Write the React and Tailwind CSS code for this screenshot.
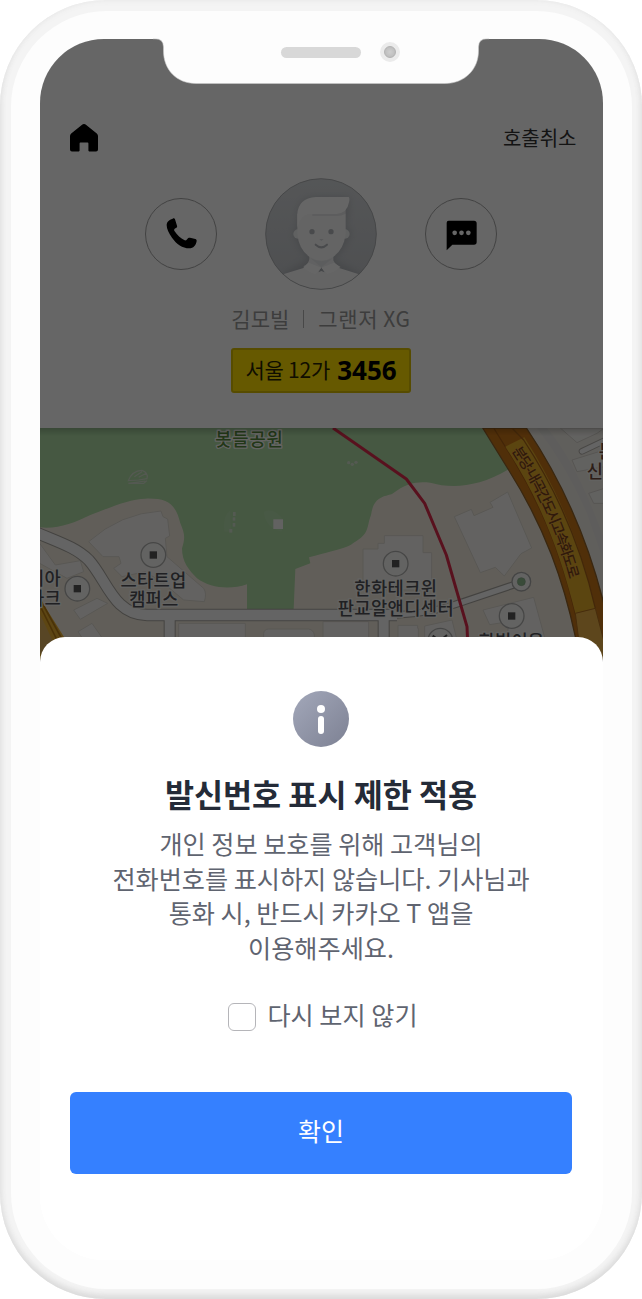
import React from "react";

function HomeIcon() {
  return (
    <svg className="h-7 w-7" viewBox="0 0 28 28" fill="#000">
      <path d="M12.4.6a2.6 2.6 0 0 1 3.2 0l11.2 8.900c.8.7 1.2 1.5 1.2 2.5V25.400a2 2 0 0 1-2 2h-6.800a.8.8 0 0 1-.8-.8V19.400a.8.8 0 0 0-.8-.8h-7.200a.8.8 0 0 0-.8.8v7.200a.8.8 0 0 1-.8.8h-6.800a2 2 0 0 1-2-2V12c0-1 .4-1.800 1.200-2.500z" />
    </svg>
  );
}

function PhoneIcon() {
  return (
    <svg className="h-[31px] w-[31px]" viewBox="0 0 93 93" fill="#000">
      <path d="M20 2C23 0 26 1 27 4L33 23C34 26 33 28 31 29L26 32C24 34 24 37 26 40C34 52 43 61 56 67C59 68 61 67 62 65L66 61C67 59 70 59 72 59L88 63C91 64 92 66 92 69C90 82 82 91 70 91C49 90 32 79 18 59C8 45 2 33 2 22C2 12 9 5 20 2Z" />
    </svg>
  );
}

function ChatIcon() {
  return (
    <svg className="mt-[3px] h-[31px] w-[31px]" viewBox="0 0 93 93">
      <path d="M8 2H84Q92 2 92 10V66Q92 74 84 74H19L2 91V8Q2 2 8 2Z" fill="#000" />
      <circle cx="26" cy="38.500" r="7" fill="#fff" />
      <circle cx="46.500" cy="38.500" r="7" fill="#fff" />
      <circle cx="67" cy="38.500" r="7" fill="#fff" />
    </svg>
  );
}

function Avatar() {
  return (
    <svg className="h-[112px] w-[112px]" viewBox="405 23 336 336">
      <defs>
        <clipPath id="face">
          <circle cx="573" cy="191" r="166" />
        </clipPath>
        <linearGradient id="faceBg" x1="0" y1="0" x2="0" y2="1">
          <stop offset="0" stopColor="#d4d7da" />
          <stop offset="1" stopColor="#c2c5c9" />
        </linearGradient>
        <filter id="soft" x="-30%" y="-30%" width="160%" height="160%">
          <feGaussianBlur stdDeviation="9" />
        </filter>
      </defs>
      <g clipPath="url(#face)">
        <rect x="405" y="23" width="336" height="336" fill="url(#faceBg)" />
        <path d="M502 140Q502 80 560 80H657Q660 120 648 170Q672 180 655 208Q640 240 612 268L690 310L740 359H430L460 310L536 265Q508 240 500 210Q480 190 500 172Z" fill="#8d9198" opacity=".35" filter="url(#soft)" />
        <path d="M440 318L530 290L573 300L618 290L706 318L720 359H430Z" fill="#fafafa" />
        <path d="M538 240H610V270Q615 282 632 290L590 310L574 293L557 310L520 288Q536 282 538 266Z" fill="#f2f3f4" />
        <path d="M541 263Q573 282 609 263L574 291Z" fill="#dfe1e3" opacity=".6" />
        <path d="M565 306L574 291L584 306L574 302Z" fill="#aaaeb4" />
        <path d="M536 277L520 292Q538 307 557 311L574 292ZM612 277L630 290Q612 307 591 311L574 292Z" fill="#fff" />
        <circle cx="504" cy="191" r="14" fill="#f1f2f3" />
        <circle cx="645" cy="191" r="14" fill="#f1f2f3" />
        <path d="M502 130H647V190Q642 236 610 259Q574 281 538 259Q506 236 502 190Z" fill="#fafafa" />
        <path d="M547 129H625L647 115V130Q635 137 620 137H547Z" fill="#e8e9ea" />
        <path d="M502 172V132Q504 84 558 80H656Q660 84 657 96Q652 128 620 131H535Q510 136 502 172Z" fill="#fff" />
        <circle cx="546" cy="184" r="8" fill="#b7babf" />
        <circle cx="603" cy="184" r="8" fill="#b7babf" />
        <path d="M568 206H581L574 212Z" fill="#dadcdf" />
        <path d="M557 223Q574 239 591 223" stroke="#b7babf" strokeWidth="6" fill="none" strokeLinecap="round" />
      </g>
      <circle cx="573" cy="191" r="166" fill="none" stroke="#a5a7aa" strokeWidth="2.500" />
    </svg>
  );
}

function Poi({ x, y }) {
  return (
    <g>
      <circle cx={x} cy={y} r="37" fill="#f8f8f6" stroke="#b0b0ae" strokeWidth="4" />
      <rect x={x - 11} y={y - 11} width="22" height="22" fill="#555" />
    </g>
  );
}

function Label({ x, y, width, fill = "#505257", children }) {
  return (
    <text x={x} y={y} textAnchor="middle" textLength={width} fontSize="53" fontWeight="500" fill={fill} stroke="#f8f8f4" strokeWidth="8" strokeLinejoin="round" paintOrder="stroke">
      {children}
    </text>
  );
}

function CityMap() {
  return (
    <svg className="block h-[232px] w-full font-['Noto_Sans_CJK_KR',sans-serif]" viewBox="29 24 1689 696" preserveAspectRatio="none">
      <defs>
        <linearGradient id="mapShade" x1="0" y1="0" x2="0" y2="1">
          <stop offset="0" stopColor="#000" stopOpacity=".18" />
          <stop offset="1" stopColor="#000" stopOpacity="0" />
        </linearGradient>
        <path id="highwayName" d="M1444 92C1527 215 1582 350 1619 484" />
      </defs>
      <rect x="28" y="24" width="1694" height="700" fill="#f3ecde" />

      <path d="M28 24V322C80 328 130 310 180 285C240 262 300 236 345 236C410 234 436 250 450 310C462 340 466 350 455 385C455 425 475 450 500 475C540 505 600 510 650 493V567H790L795 447L840 430L836 412Q855 408 870 403C920 388 950 385 970 368C1020 340 1008 320 1022 285C1030 230 1060 230 1085 222C1130 188 1160 184 1200 188C1260 205 1340 205 1435 148L1355 24Z" fill="#aedba5" />
      <g fill="#b5deac">
        <path d="M600 270Q575 290 582 335H602Z" />
        <path d="M700 275Q730 260 760 300L755 335Q705 325 700 275Z" />
      </g>
      <path d="M294 182Q305 152 335 151Q355 158 350 176L325 180Q300 181 294 182ZM294 190L345 183M294 190L340 190L350 182M312 170L335 155M325 172L348 160" stroke="#d3dfcc" strokeWidth="3.500" fill="none" />
      <g fill="#d3e0cc">
        <rect x="608" y="276" width="8" height="12" />
        <rect x="607" y="292" width="8" height="10" />
        <rect x="607" y="309" width="8" height="11" />
        <rect x="597" y="327" width="9" height="11" />
        <circle cx="955" cy="128" r="5" />
        <circle cx="966" cy="133" r="5" />
        <circle cx="977" cy="127" r="5" />
        <rect x="729" y="298" width="29" height="29" fill="#f5f5f2" />
      </g>

      <g fill="#f8f6f3" stroke="#dedad2" strokeWidth="3">
        <path d="M175 365Q270 280 392 273L398 290L412 297L418 348L405 355L410 410L520 505Q530 520 522 545L460 540L400 490L345 455L275 470L250 445L272 430L266 410L218 410Z" />
        <path d="M28 370L75 435L150 422L160 455L110 475L28 430Z" />
        <path d="M130 570L200 535L232 550L150 598Z" />
        <path d="M143 635L185 610L220 660H160Z" />
        <path d="M445 610H645V660H445Z" />
        <path d="M700 660V640Q702 627 715 627H835Q850 630 852 645V660Z" />
        <path d="M878 605H1015V660H878Z" />
        <path d="M998 510V387H1043V370H1062V347H1178V398H1204V510Z" />
        <path d="M1272 290L1323 268L1331 287L1388 262L1379 247L1432 216L1504 384L1472 401L1422 468L1395 442L1350 458Z" />
        <path d="M1358 570L1510 532L1545 660H1430L1435 605L1378 614Z" />
        <path d="M1103 660V616H1162V625H1164V660Z" />
        <path d="M1183 618L1265 600L1280 660H1183Z" />
      </g>
      <path d="M1488 24H1722V640Z" fill="#f1ede6" />
      <path d="M1520 24Q1610 140 1670 280L1722 430V360Q1640 130 1550 24Z" fill="#eae8e5" />
      <g fill="#f6f4f0" stroke="#d8d5cf" strokeWidth="3">
        <path d="M1590 24L1640 68L1700 40L1722 24Z" />
        <path d="M1625 120L1722 90V140L1640 155Z" />
        <path d="M1675 220L1722 205V250L1690 250Z" />
      </g>

      <g fill="none" strokeLinejoin="round">
        <path d="M0 330C80 365 135 380 175 420C230 480 250 585 350 585H1100" stroke="#aaa7a2" strokeWidth="37" />
        <path d="M418 590V700M1060 590V700" stroke="#aaa7a2" strokeWidth="36" />
        <path d="M1090 585C1200 580 1250 562 1300 545L1455 493" stroke="#aaa7a2" strokeWidth="23" />
        <path d="M0 330C80 365 135 380 175 420C230 480 250 585 350 585H1100" stroke="#fbfbfa" strokeWidth="31" />
        <path d="M1085 585C1200 580 1250 562 1300 545L1455 493" stroke="#fbfbfa" strokeWidth="16" />
        <path d="M418 580V700M1060 580V700" stroke="#fbfbfa" strokeWidth="30" />
        <path d="M1655 94L1722 62" stroke="#b4b1ac" strokeWidth="20" strokeLinecap="round" />
        <path d="M1655 94L1722 62" stroke="#fbfbfa" strokeWidth="14" strokeLinecap="round" />
      </g>
      <circle cx="1473" cy="485" r="28" fill="#f8f8f6" stroke="#aaa" strokeWidth="4" />
      <circle cx="1473" cy="485" r="12" fill="#8fbb90" stroke="#8aa88a" strokeWidth="2" />

      <path d="M1357 24L1435 150C1545 325 1600 485 1635 650L1640 720H1725V570C1680 380 1600 190 1488 24Z" fill="#c97618" stroke="#8f6128" strokeWidth="4" />
      <path d="M1390 24L1450 120C1550 285 1610 450 1650 650L1655 720" fill="none" stroke="#a85e14" strokeWidth="4" />
      <path d="M1425 80L1482 52C1590 220 1655 390 1695 565L1635 580C1590 400 1530 240 1425 80Z" fill="#e3ac28" />
      <path d="M1635 580L1695 565L1725 680V720H1653Z" fill="#e8ae48" stroke="#b0701f" strokeWidth="3" />
      <path d="M1445 24L1480 60C1585 220 1655 390 1695 565" fill="none" stroke="#a86318" strokeWidth="4" />
      <path d="M28 535L110 665V720H28Z" fill="#e9ae30" />
      <path d="M28 535L113 690M28 555L95 690" stroke="#b97e14" strokeWidth="5" />
      <path d="M28 580L85 700H28Z" fill="#dcae5c" />

      <path d="M908 24L1128 177L1183 250L1248 405L1310 620L1312 665" fill="none" stroke="#dd2c4c" strokeWidth="9" strokeLinejoin="round" />

      <text fontSize="43" fontWeight="500" fill="#78421c" stroke="#eda93c" strokeWidth="3" paintOrder="stroke">
        <textPath href="#highwayName" textLength="425">분당-내곡간도시고속화도로</textPath>
      </text>

      <Poi x={369} y={405} />
      <Poi x={141} y={506} />
      <Poi x={1096} y={431} />
      <Poi x={1444} y={588} />
      <circle cx="1230" cy="662" r="37" fill="#f8f8f6" stroke="#b0b0ae" strokeWidth="4" />
      <path d="M1207 647L1218 655M1238 655L1250 645" stroke="#555" strokeWidth="6" />

      <Label x={656} y={77} width={202} fill="#568a3c">봇들공원</Label>
      <Label x={369} y={500} width={197}>스타트업</Label>
      <Label x={370} y={559} width={147}>캠퍼스</Label>
      <Label x={42} y={495} width={98}>리아</Label>
      <Label x={42} y={554} width={98}>파크</Label>
      <Label x={1096} y={525} width={248}>한화테크윈</Label>
      <Label x={1096} y={585} width={348}>판교알앤디센터</Label>
      <Label x={1443} y={683} width={196}>한빛이음</Label>
      <Label x={1730} y={113} width={50} fill="#704b3c">분</Label>
      <Label x={1718} y={175} width={98} fill="#704b3c">신당</Label>
      <rect x="28" y="24" width="1694" height="24" fill="url(#mapShade)" />
    </svg>
  );
}

function Notch() {
  return (
    <div className="absolute top-[38px] left-[153px] flex h-[46px] w-[336px]">
      <svg className="h-[46px] w-[336px]" viewBox="0 0 336 46">
        <path d="M0 0V.8H2Q10.500.8 10.500 9V13C10.500 31 23 45.500 43 45.500H292C312 45.500 325.500 31 325.500 13V9Q325.500.8 334 .8H336V0Z" fill="#fdfdfd" />
        <path d="M0 .8H2Q10.500.8 10.500 9V13C10.500 31 23 45.500 43 45.500H292C312 45.500 325.500 31 325.500 13V9Q325.500.8 334 .8H336" fill="none" stroke="#c9c9c9" strokeWidth=".6" />
      </svg>
    </div>
  );
}

function Speaker() {
  return (
    <div className="absolute top-[42px] left-[281px] flex items-center gap-[19px]">
      <div className="h-[11px] w-[80px] rounded-full bg-[#d8d8d8]" />
      <div className="flex h-5 w-5 items-center justify-center rounded-full bg-[#ebebeb]">
        <div className="h-3 w-3 rounded-full border border-[#b2b2b2] bg-radial from-[#cecece] to-[#b8b8b8]" />
      </div>
    </div>
  );
}

function CallScreen() {
  return (
    <div className="flex flex-col bg-white">
      <div className="flex h-[389px] flex-col items-center pt-[83px]">
        <div className="flex h-8 w-full items-center justify-between pr-[26px] pl-[30px]">
          <HomeIcon />
          <span className="text-[20px] leading-8 text-[#333]">호출취소</span>
        </div>
        <div className="mt-6 flex items-center gap-[48px]">
          <div className="-mt-px flex h-[72px] w-[72px] items-center justify-center rounded-full border border-[#a5a5a5]">
            <PhoneIcon />
          </div>
          <Avatar />
          <div className="-mt-px flex h-[72px] w-[72px] items-center justify-center rounded-full border border-[#a5a5a5]">
            <ChatIcon />
          </div>
        </div>
        <div className="mt-[14px] flex h-[30px] items-center gap-[14px] text-[21px] text-[#999]">
          <span>김모빌</span>
          <span className="h-[18px] w-px bg-[#b5b5b5]" />
          <span className="tracking-[0.6px]">그랜저 XG</span>
        </div>
        <div className="mt-[14px] flex h-[45px] w-[180px] items-center justify-center gap-[7px] rounded-[3px] border-2 border-[#d9bd00] bg-[#ffdf00]">
          <span className="-mt-px text-[21px] tracking-[-0.2px] text-[#2a2500]">서울 12가</span>
          <span className="font-['Open_Sans',sans-serif] text-[26px] font-bold text-black">3456</span>
        </div>
      </div>
      <CityMap />
    </div>
  );
}

function InfoIcon() {
  return (
    <div className="flex h-14 w-14 flex-col items-center gap-[3px] rounded-full bg-linear-to-br from-[#a3a8ba] to-[#7d8193] pt-[14px]">
      <div className="h-2 w-2 rounded-full bg-white" />
      <div className="h-[18px] w-[6px] rounded-full bg-white" />
    </div>
  );
}

function NoticeSheet() {
  return (
    <div className="absolute inset-x-0 bottom-0 flex h-[623px] flex-col items-center rounded-t-[25px] bg-white pt-[54px] text-[#5f6470]">
      <InfoIcon />
      <h1 className="mt-[26px] text-[31.6px] leading-[40px] font-bold text-[#242b38]">발신번호 표시 제한 적용</h1>
      <p className="mt-[13px] text-center text-[25.15px] leading-[34.5px] whitespace-nowrap">
        개인 정보 보호를 위해 고객님의
        <br />
        전화번호를 표시하지 않습니다. 기사님과
        <br />
        통화 시, 반드시 카카오 T 앱을
        <br />
        이용해주세요.
      </p>
      <label className="mt-8 flex h-9 items-center gap-[11px] pl-[4px] text-[25.15px] leading-9">
        <input type="checkbox" className="mt-[5px] h-7 w-7 appearance-none rounded-[6px] border border-[#b5b5b9] bg-white" />
        <span>다시 보지 않기</span>
      </label>
      <button className="mt-[60px] h-[82px] w-[502px] rounded-[6px] bg-[#3580ff] pb-1 text-[25px] text-white">확인</button>
    </div>
  );
}

export default function App() {
  return (
    <div className="h-[1299px] w-[642px] bg-white font-['Noto_Sans_CJK_KR',sans-serif]">
      <div className="relative h-full w-full rounded-[106px] bg-[#f4f4f4] p-[10.5px] shadow-[inset_0_-4px_6px_#dadada,inset_0_0_6px_#e8e8e8]">
        <div className="h-full w-full rounded-[96px] bg-[#fdfdfd] px-[29px] pt-[28.5px] pb-[29px]">
          <div className="relative h-[1221px] w-full overflow-hidden rounded-[64px] bg-white">
            <CallScreen />
            <div className="absolute inset-x-0 top-0 h-[640px] bg-black/60" />
            <NoticeSheet />
          </div>
        </div>
        <Notch />
        <Speaker />
      </div>
    </div>
  );
}
